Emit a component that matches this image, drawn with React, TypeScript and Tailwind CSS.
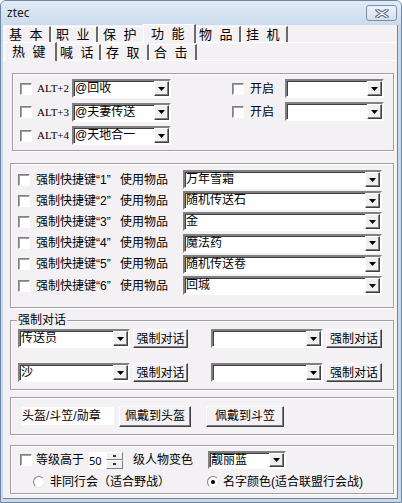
import clsx from 'clsx';

const FACE = 'bg-[#f4f1f4]';

function Arrow() {
    return (
        <svg width="7" height="4" viewBox="0 0 7 4">
            <polygon points="0,0 7,0 3.5,4" fill="#000" />
        </svg>
    );
}

function Check() {
    return (
        <span className="inline-block w-[12px] h-[12px] shrink-0 bg-white border border-t-[#808080] border-l-[#808080] border-b-white border-r-white shadow-[inset_1px_1px_0_#a0a0a0]" />
    );
}

function Radio({ on }: { on?: boolean }) {
    return (
        <span className="relative inline-flex w-[12px] h-[12px] shrink-0 items-center justify-center rounded-full bg-white border border-t-[#808080] border-l-[#808080] border-b-[#e8e8e8] border-r-[#e8e8e8]">
            {on && <span className="w-[4px] h-[4px] rounded-full bg-black" />}
        </span>
    );
}

function Combo({ text, w, h = 19 }: { text?: string; w: string; h?: number }) {
    return (
        <div
            className={clsx(
                'flex shrink-0 items-stretch bg-white border-2 border-t-[#808080] border-l-[#808080] border-b-white border-r-white shadow-[inset_1px_1px_0_#404040]',
                w,
                h === 18 ? 'h-[18px]' : 'h-[19px]',
            )}
        >
            <span className="flex-1 pl-[1px] text-[12px] leading-[15px] text-black truncate">{text}</span>
            <span className="flex w-[15px] items-center justify-center bg-[#f0f0f0] border border-t-white border-l-white border-b-[#404040] border-r-[#404040] shadow-[inset_-1px_-1px_0_#808080]">
                <Arrow />
            </span>
        </div>
    );
}

function Btn({ children, w, h = 19 }: { children: string; w: string; h?: number }) {
    return (
        <button
            className={clsx(
                'flex shrink-0 items-center justify-center whitespace-nowrap text-[12px] text-black bg-[#f4f1f4] border border-t-white border-l-white border-b-[#404040] border-r-[#404040] shadow-[inset_-1px_-1px_0_#808080]',
                w,
                h === 21 ? 'h-[21px]' : 'h-[19px]',
            )}
        >
            {children}
        </button>
    );
}

function Tab({ label, w, active }: { label: string; w: string; active?: boolean }) {
    return (
        <div
            className={clsx(
                'relative flex items-center whitespace-nowrap overflow-hidden text-[13px] tracking-[2px] text-black border-t border-l border-white border-r-2 border-r-[#6a6a6a] shrink-0',
                w,
                active ? 'h-[19px] -mb-px -mx-[2px] z-10 bg-[#f4f1f4] pl-[7px]' : 'h-[16px] pl-[4px]',
            )}
        >
            {label}
        </div>
    );
}

function Group({ className, children }: { className: string; children: React.ReactNode }) {
    return (
        <div className={clsx('relative border border-[#a0a0a0] shadow-[inset_1px_1px_0_#fff,1px_1px_0_#fff]', className)}>
            {children}
        </div>
    );
}

const hotkeys = [
    { n: '1', item: '万年雪霜' },
    { n: '2', item: '随机传送石' },
    { n: '3', item: '金' },
    { n: '4', item: '魔法药' },
    { n: '5', item: '随机传送卷' },
    { n: '6', item: '回城' },
];

export default function App() {
    return (
        <div className="w-[402px] h-[503px] flex flex-col bg-[#c9d9ec] border border-[#6e85a3] rounded-t-[6px] overflow-hidden font-['Liberation_Sans','Noto_Sans_CJK_SC',sans-serif] text-[12px] text-black">
            {/* title bar */}
            <div className="h-[24px] flex items-center justify-between pl-[6px] pr-[4px] bg-gradient-to-b from-[#e2ecf7] to-[#cbdbed]">
                <span className="text-[12px] text-[#1a1a1a] font-['Noto_Sans',sans-serif]">ztec</span>
                <span className="flex w-[31px] h-[16px] items-center justify-center rounded-[3px] border border-[#7d8ea5] bg-gradient-to-b from-[#eef3f9] to-[#d4dfec]">
                    <svg width="14" height="9" viewBox="0 0 14 9">
                        <path d="M2 1 L12 8 M12 1 L2 8" stroke="#56677e" strokeWidth="3.4" strokeLinecap="round" />
                        <path d="M2 1 L12 8 M12 1 L2 8" stroke="#ffffff" strokeWidth="1.4" strokeLinecap="round" />
                    </svg>
                </span>
            </div>

            {/* window body */}
            <div className={clsx('flex-1 flex flex-col ml-[2px] mr-[3px] mb-[3px] border-r border-b border-[#808080]', FACE)}>
                <div className="flex items-end h-[18px] pl-[1px] border-b border-white">
                    <Tab label="基 本" w="w-[47px]" />
                    <Tab label="职 业" w="w-[47px]" />
                    <Tab label="保 护" w="w-[47px]" />
                    <Tab label="功 能" w="w-[53px]" active />
                    <Tab label="物 品" w="w-[47px]" />
                    <Tab label="挂 机" w="w-[47px]" />
                </div>
                <div className="flex items-end h-[18px] pl-[3px] border-b border-white">
                    <Tab label="热 键" w="w-[53px]" active />
                    <Tab label="喊 话" w="w-[46px]" />
                    <Tab label="存 取" w="w-[48px]" />
                    <Tab label="合 击" w="w-[48px]" />
                </div>

                {/* ALT hotkeys */}
                <Group className="mt-[12px] ml-[9px] w-[382px] h-[78px] flex pt-[5px]">
                    <div className="flex flex-col gap-[4.5px] pl-[7px]">
                        {[
                            ['ALT+2', '@回收'],
                            ['ALT+3', '@夫妻传送'],
                            ['ALT+4', '@天地合一'],
                        ].map(([k, v]) => (
                            <div key={k} className="flex items-center h-[19px]">
                                <Check />
                                <span className="ml-[5px] w-[35px] shrink-0 font-['Liberation_Serif',serif] text-[11px]">{k}</span>
                                <Combo text={v} w="w-[99px]" />
                            </div>
                        ))}
                    </div>
                    <div className="flex flex-col gap-[4px] ml-auto mr-[9px]">
                        {[0, 1].map((i) => (
                            <div key={i} className="flex items-center h-[19px]">
                                <Check />
                                <span className="ml-[6px] w-[35px] shrink-0">开启</span>
                                <Combo w="w-[99px]" />
                            </div>
                        ))}
                    </div>
                </Group>

                {/* forced hotkeys */}
                <Group className="mt-[12px] ml-[7px] w-[384px] h-[145px] flex flex-col gap-[2px] pt-[6px]">
                    {hotkeys.map((h) => (
                        <div key={h.n} className="flex items-center h-[19.2px]">
                            <span className="ml-[7px] flex">
                                <Check />
                            </span>
                            <span className="ml-[6px] w-[84px] shrink-0">强制快捷键“{h.n}”</span>
                            <span>使用物品</span>
                            <span className="ml-auto mr-[11px]">
                                <Combo text={h.item} w="w-[199px]" />
                            </span>
                        </div>
                    ))}
                </Group>

                {/* forced dialog */}
                <Group className="mt-[12px] ml-[7px] w-[384px] h-[70px] flex flex-col gap-[15px] pt-[8px]">
                    <span className={clsx('absolute left-[6px] -top-[8px] px-[1px] text-[12px] leading-[15px]', FACE)}>强制对话</span>
                    {['传送员', '沙'].map((t) => (
                        <div key={t} className="flex items-center">
                            <span className="ml-[7px]">
                                <Combo text={t} w="w-[112px]" />
                            </span>
                            <span className="ml-[3px]">
                                <Btn w="w-[55px]">强制对话</Btn>
                            </span>
                            <span className="ml-[23px]">
                                <Combo w="w-[112px]" />
                            </span>
                            <span className="ml-[3px]">
                                <Btn w="w-[56px]">强制对话</Btn>
                            </span>
                        </div>
                    ))}
                </Group>

                {/* helmet */}
                <Group className="mt-[7px] ml-[7px] w-[384px] h-[38px] flex items-center">
                    <span className="ml-[11px] w-[92px] h-[18px] shrink-0 bg-white leading-[18px] whitespace-nowrap">头盔/斗笠/勋章</span>
                    <span className="ml-[5px]">
                        <Btn w="w-[72px]" h={21}>佩戴到头盔</Btn>
                    </span>
                    <span className="ml-[15px]">
                        <Btn w="w-[78px]" h={21}>佩戴到斗笠</Btn>
                    </span>
                </Group>

                {/* level colour */}
                <Group className="mt-[10px] ml-[7px] w-[384px] h-[49px] flex flex-col pt-[5px]">
                    <div className="flex items-center h-[18px]">
                        <span className="ml-[9px] flex">
                            <Check />
                        </span>
                        <span className="ml-[4px] w-[48px] shrink-0">等级高于</span>
                        <span className="ml-[5px] w-[17px] h-[17px] shrink-0 bg-white text-[11px] leading-[17px] font-['Noto_Sans',sans-serif]">50</span>
                        <span className="flex flex-col w-[17px] h-[17px] shrink-0">
                            {[0, 1].map((i) => (
                                <span key={i} className="flex flex-1 items-center justify-center bg-[#f0f0f0] border border-t-white border-l-white border-b-[#808080] border-r-[#808080]">
                                    <span className="w-[3px] h-[2px] bg-[#303030]" />
                                </span>
                            ))}
                        </span>
                        <span className="ml-[10px] w-[60px] shrink-0">级人物变色</span>
                        <span className="ml-[15px]">
                            <Combo text="靓丽蓝" w="w-[78px]" h={18} />
                        </span>
                    </div>
                    <div className="flex items-center h-[14px] mt-[6px]">
                        <span className="ml-[22px] flex">
                            <Radio />
                        </span>
                        <span className="ml-[5px] w-[157px] shrink-0">非同行会（适合野战）</span>
                        <Radio on />
                        <span className="ml-[4px]">名字颜色(适合联盟行会战)</span>
                    </div>
                </Group>
            </div>
        </div>
    );
}
